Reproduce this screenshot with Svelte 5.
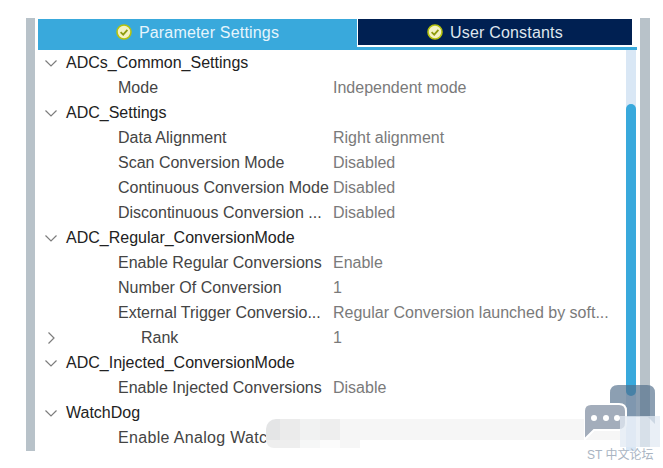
<script>
    const rows = [
        { level: 0, label: "ADCs_Common_Settings" },
        { level: 1, label: "Mode", value: "Independent mode" },
        { level: 0, label: "ADC_Settings" },
        { level: 1, label: "Data Alignment", value: "Right alignment" },
        { level: 1, label: "Scan Conversion Mode", value: "Disabled" },
        { level: 1, label: "Continuous Conversion Mode", value: "Disabled" },
        { level: 1, label: "Discontinuous Conversion ...", value: "Disabled" },
        { level: 0, label: "ADC_Regular_ConversionMode" },
        { level: 1, label: "Enable Regular Conversions", value: "Enable" },
        { level: 1, label: "Number Of Conversion", value: "1" },
        { level: 1, label: "External Trigger Conversio...", value: "Regular Conversion launched by soft..." },
        { level: 2, label: "Rank", value: "1" },
        { level: 0, label: "ADC_Injected_ConversionMode" },
        { level: 1, label: "Enable Injected Conversions", value: "Disable" },
        { level: 0, label: "WatchDog" },
        { level: 1, label: "Enable Analog Watc", value: "", cut: true }
    ];
</script>

{#snippet check()}
    <svg class="check" width="16" height="16" viewBox="0 0 16 16">
        <circle cx="8" cy="8" r="7" fill="#f4f3c4" stroke="#b5c20e" stroke-width="1.6" />
        <path d="M4.6 8.2 L7.2 10.6 L11.4 5.8" fill="none" stroke="#8f9c10" stroke-width="1.8" />
    </svg>
{/snippet}

<div class="page">
    <div class="frame">
        <div class="side"></div>
        <div class="panel">
            <div class="tabs">
                <div class="tab active">{@render check()}<span>Parameter Settings</span></div>
                <div class="tab">{@render check()}<span>User Constants</span></div>
            </div>
            <div class="content">
                <div class="tree">
                    {#each rows as row}
                        <div class="row">
                            <span class="arrow">
                                {#if row.level === 0}
                                    <svg width="14" height="14" viewBox="0 0 14 14"><path d="M1.5 4.5 L7 10 L12.5 4.5" fill="none" stroke="#7d7d7d" stroke-width="1.2" /></svg>
                                {:else if row.level === 2}
                                    <svg width="14" height="14" viewBox="0 0 14 14"><path d="M4.5 1.5 L10 7 L4.5 12.5" fill="none" stroke="#7d7d7d" stroke-width="1.2" /></svg>
                                {/if}
                            </span>
                            {#if row.level === 0}
                                <span class="group">{row.label}</span>
                            {:else}
                                <span class="label" class:deep={row.level === 2} class:cut={row.cut}>{row.label}</span>
                                <span class="value">{row.value}</span>
                            {/if}
                        </div>
                    {/each}
                </div>
                <div class="scrollbar"><div class="thumb"></div></div>
            </div>
        </div>
        <div class="side right"></div>
    </div>

    <div class="smudge"></div>
    <div class="smudge low"></div>
    <div class="watermark">
        <svg class="bubbles" width="79" height="60" viewBox="0 0 79 60">
            <path d="M34 0 H63 Q71 0 71 8 V39 L64 32 H26 V8 Q26 0 34 0 Z" fill="#4f6c88" opacity="0.65" />
            <path d="M7 19 H35 Q42 19 42 26 V38 Q42 45 35 45 H10 L0 55 V26 Q0 19 7 19 Z" fill="#a3adbb" stroke="#fff" stroke-width="2" />
            <circle cx="10" cy="33" r="3" fill="#fff" />
            <circle cx="22" cy="33" r="3" fill="#fff" />
            <circle cx="33" cy="33" r="3" fill="#fff" />
        </svg>
        <div class="patch"></div>
        <div class="wm-text">ST 中文论坛</div>
    </div>
</div>

<style>
    :global(body) {
        margin: 0;
        background: #fff;
    }

    .page {
        position: relative;
        width: 663px;
        height: 468px;
        overflow: hidden;
        padding: 18px 0 0 26px;
        box-sizing: border-box;
        font-family: "Liberation Sans", Roboto, sans-serif;
    }

    .frame {
        display: flex;
        width: 624px;
        height: 433px;
    }

    .side {
        width: 9px;
        background: #b8c2c9;
        flex: none;
    }

    .side.right {
        width: 10px;
        height: 429px;
        margin-left: 3px;
    }

    .panel {
        width: 602px;
        margin-left: 2px;
        overflow: hidden;
        display: flex;
        flex-direction: column;
    }

    .tabs {
        display: flex;
        height: 28px;
        margin: 1px 0 0 1px;
        border-bottom: 3px solid #39a9dc;
        flex: none;
    }

    .tab {
        display: flex;
        align-items: center;
        justify-content: center;
        gap: 7px;
        height: 26px;
        width: 274px;
        margin-left: 1px;
        margin-right: 5px;
        background: #002052;
        color: #dfe6ee;
        font-size: 16px;
        letter-spacing: 0.18px;
    }

    .tab span {
        padding-top: 2px;
    }

    .tab.active {
        width: 319px;
        height: 28px;
        box-sizing: border-box;
        padding-bottom: 2px;
        margin: 0;
        background: #39a9dc;
        color: #e6f5fc;
    }

    .check {
        flex: none;
    }

    .content {
        display: flex;
        flex: 1;
        min-height: 0;
        margin-right: 1px;
    }

    .tree {
        flex: 1;
    }

    .row {
        display: flex;
        align-items: center;
        height: 25px;
        color: #333;
        font-size: 16px;
        white-space: nowrap;
    }

    .arrow {
        display: flex;
        width: 14px;
        margin: 0 8px 0 7px;
        flex: none;
    }

    .group {
        color: #222;
    }

    .label {
        width: 215px;
        margin-left: 52px;
        flex: none;
        color: #444;
    }

    .label.deep {
        margin-left: 75px;
        width: 192px;
    }

    .label.cut {
        letter-spacing: 0.33px;
    }

    .value {
        color: #7a7a7a;
    }

    .scrollbar {
        width: 10px;
        background: #d9e7f5;
        flex: none;
        padding-top: 54px;
    }

    .thumb {
        height: 292px;
        background: #39a9dc;
        border-radius: 5px;
    }

    .smudge {
        position: absolute;
        left: 266px;
        top: 419px;
        width: 354px;
        height: 21px;
        border-radius: 10px 0 0 0;
        background: linear-gradient(90deg, #e4e5e6 14px, #ebebeb 14px 34px, #f1f2f2 34px 54px, #eeeeee 54px 74px, #f6f6f6 74px);
    }

    .smudge.low {
        top: 440px;
        width: 94px;
        height: 8px;
        border-radius: 0 0 0 10px;
        background: linear-gradient(90deg, #eeeeee 34px, #f6f7f7 34px 54px, #fbfbfb 54px 74px, #f6f6f6 74px);
    }

    .watermark {
        position: absolute;
        left: 584px;
        top: 385px;
        width: 79px;
    }

    .bubbles {
        display: block;
    }

    .patch {
        position: absolute;
        left: 36px;
        top: 31px;
        width: 40px;
        height: 31px;
        background: rgba(225, 233, 243, 0.75);
    }

    .wm-text {
        margin: 0 0 0 3px;
        font-size: 12px;
        color: #a9b4c2;
        white-space: nowrap;
        font-family: "Liberation Sans", "Noto Sans CJK SC", sans-serif;
    }
</style>
